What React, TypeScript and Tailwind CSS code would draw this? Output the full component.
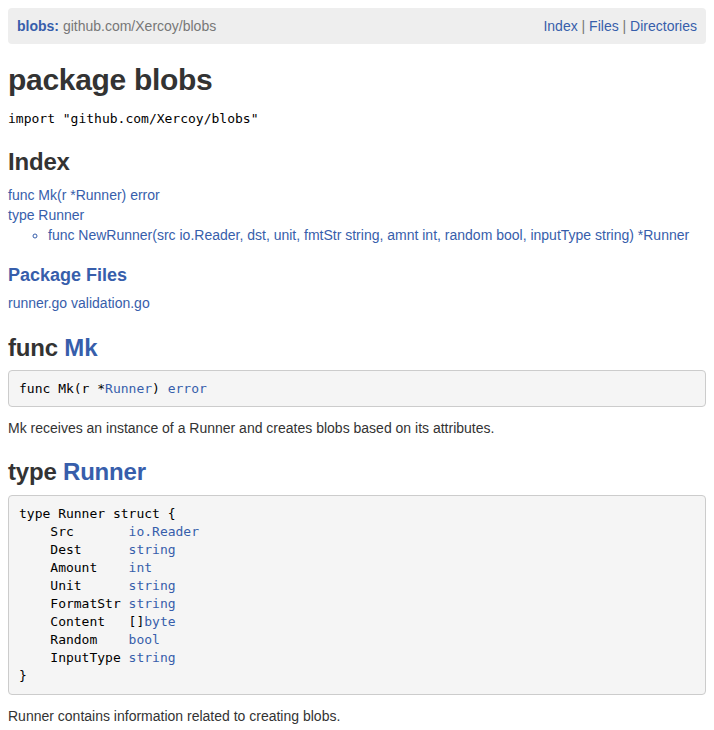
const blue = "text-[#375eab]";

function Nav() {
  return (
    <div className="m-2 flex h-9 items-center justify-between rounded bg-[#eeeeee] px-[9px] text-[14px]">
      <div>
        <span className={`font-bold ${blue}`}>blobs:</span>{" "}
        <span className="text-[#777777]">github.com/Xercoy/blobs</span>
      </div>
      <div className="text-[#777777]">
        <a className={blue}>Index</a> | <a className={blue}>Files</a> | <a className={blue}>Directories</a>
      </div>
    </div>
  );
}

export default function App() {
  return (
    <div className="bg-white px-2 pb-4 font-['Liberation_Sans',Arial,sans-serif] text-[14px] leading-[20px] text-[#333333]">
      <div className="-mx-2">
        <Nav />
      </div>

      <h1 className="mt-[16px] text-[30px] leading-[40px] font-bold tracking-[-0.3px]">package blobs</h1>
      <p className="mt-[9px] font-['DejaVu_Sans_Mono',monospace] text-[13px] text-black">
        import "github.com/Xercoy/blobs"
      </p>

      <h2 className="mt-[17px] text-[24px] leading-[32px] font-bold tracking-[-0.2px]">Index</h2>
      <div className={`mt-[7px] ${blue}`}>
        <div>func Mk(r *Runner) error</div>
        <div>type Runner</div>
        <ul className="list-[circle] pl-10">
          <li>func NewRunner(src io.Reader, dst, unit, fmtStr string, amnt int, random bool, inputType string) *Runner</li>
        </ul>
      </div>

      <h4 className={`mt-[20px] text-[18px] leading-[20px] font-bold ${blue}`}>Package Files</h4>
      <p className={`mt-[8px] ${blue}`}>runner.go validation.go</p>

      <h3 className="mt-[19px] text-[24px] leading-[32px] font-bold tracking-[-0.2px]">
        func <span className={blue}>Mk</span>
      </h3>
      <pre className="mt-[6px] rounded border border-[#cccccc] bg-[#f5f5f5] px-[10px] py-[9px] font-['DejaVu_Sans_Mono',monospace] text-[13px] leading-[17px] text-black">
        func Mk(r *<span className={blue}>Runner</span>) <span className={blue}>error</span>
      </pre>
      <p className="mt-[11px]">Mk receives an instance of a Runner and creates blobs based on its attributes.</p>

      <h3 className="mt-[18px] text-[24px] leading-[32px] font-bold tracking-[-0.2px]">
        type <span className={blue}>Runner</span>
      </h3>
      <pre className="mt-[7px] rounded border border-[#cccccc] bg-[#f5f5f5] px-[10px] py-[9px] font-['DejaVu_Sans_Mono',monospace] text-[13px] leading-[18px] text-black">
{`type Runner struct {
    Src       `}<span className={blue}>io.Reader</span>{`
    Dest      `}<span className={blue}>string</span>{`
    Amount    `}<span className={blue}>int</span>{`
    Unit      `}<span className={blue}>string</span>{`
    FormatStr `}<span className={blue}>string</span>{`
    Content   []`}<span className={blue}>byte</span>{`
    Random    `}<span className={blue}>bool</span>{`
    InputType `}<span className={blue}>string</span>{`
}`}
      </pre>
      <p className="mt-[11px]">Runner contains information related to creating blobs.</p>
    </div>
  );
}
